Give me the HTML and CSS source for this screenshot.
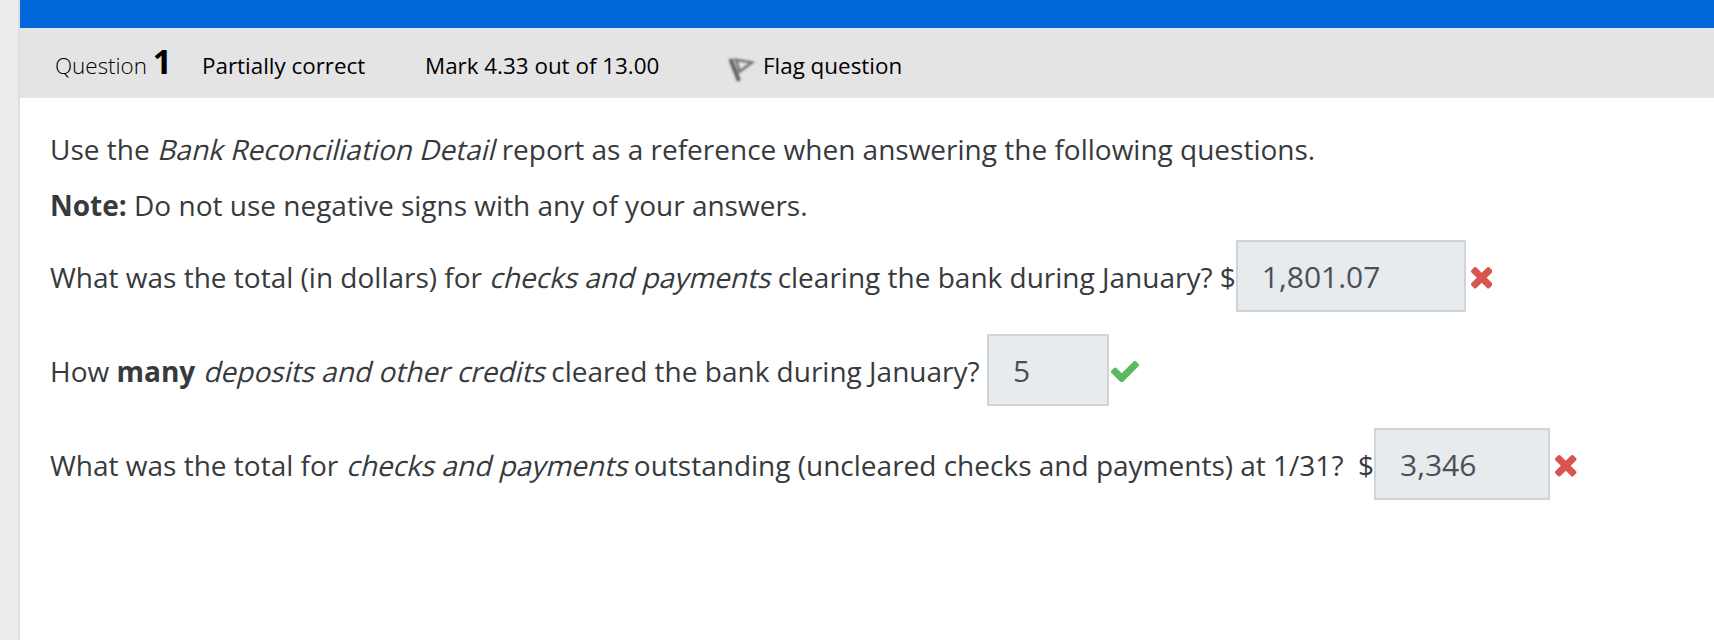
FILE: index.html
```html
<!DOCTYPE html>
<html lang="en">
<head>
<meta charset="utf-8">
<title>Question 1</title>
<link rel="stylesheet" href="styles.css">
</head>
<body>
<svg width="0" height="0" class="defs"><defs>
  <path id="remove" d="M1298 1322q0 40-28 68l-136 136q-28 28-68 28t-68-28l-294-294-294 294q-28 28-68 28t-68-28l-136-136q-28-28-28-68t28-68l294-294-294-294q-28-28-28-68t28-68l136-136q28-28 68-28t68 28l294 294 294-294q28-28 68-28t68 28l136 136q28 28 28 68t-28 68l-294 294 294 294q28 28 28 68z"/>
</defs></svg>
<main class="panel">
  <div class="banner"></div>
  <header class="info">
    <h3 class="number">Question <span class="qno">1</span></h3>
    <div class="state">Partially correct</div>
    <div class="grade">Mark 4.33 out of 13.00</div>
    <div class="flag"><svg class="flag-icon" viewBox="0 0 32 32" width="32" height="32"><g fill="none" stroke="#444"><path d="M4.500 6 L13 28" stroke-width="4.200" opacity=".8"/><path d="M8 6.500 L26 9.500 L13.500 18.500 L10.500 8" stroke-width="2.600" opacity=".7"/></g></svg>Flag question</div>
  </header>
  <section class="content">
    <p class="text">Use the <em>Bank Reconciliation Detail</em> report as a reference when answering the following questions.</p>
    <p class="text"><strong>Note:</strong> Do not use negative signs with any of your answers.</p>
    <div class="row"><span>What was the total (in dollars) for <em>checks and payments</em> clearing the bank during January? $</span><input class="answer amount" value="1,801.07" readonly><svg class="cross" viewBox="110 366 1188 1188"><use href="#remove"/></svg></div>
    <div class="row"><span>How <strong>many</strong> <em>deposits and other credits</em> cleared the bank during January? </span><input class="answer count" value="5" readonly><svg class="check" viewBox="121 338 1550 1184"><path d="M1671 566q0 40-28 68l-724 724-136 136q-28 28-68 28t-68-28l-136-136-362-362q-28-28-28-68t28-68l136-136q28-28 68-28t68 28l294 295 656-657q28-28 68-28t68 28l136 136q28 28 28 68z"/></svg></div>
    <div class="row"><span>What was the total for <em>checks and payments</em> outstanding (uncleared checks and payments) at 1/31?&nbsp; $</span><input class="answer total" value="3,346" readonly><svg class="cross" viewBox="110 366 1188 1188"><use href="#remove"/></svg></div>
  </section>
</main>
</body>
</html>
```
FILE: styles.css
```css
* { box-sizing: border-box; }
body {
  margin: 0;
  height: 640px;
  overflow: hidden;
  padding-left: 18px;
  background: #ebecee;
  font-family: "Open Sans", sans-serif;
  color: #373a3c;
}
.defs { display: none; }
.panel { height: 640px; border-left: 2px solid #dedede; background: #fff; }
.banner { height: 28px; background: #0068d9; }
.info {
  display: flex;
  align-items: baseline;
  height: 70px;
  padding: 14px 0 0 35px;
  background: #e4e4e4;
  color: #000;
  font-size: 22.4px;
  line-height: 48px;
}
.number { margin: 0; width: 147px; font-size: 22.4px; font-weight: 300; white-space: nowrap; }
.qno { font-size: 33.6px; font-weight: 700; line-height: 1; }
.state { width: 223px; }
.grade { width: 301px; }
.flag-icon { margin: 0 5px 0 0; vertical-align: -11px; filter: blur(.8px); }
.content { padding: 30px 0 0 30px; font-size: 28px; }
/* Upright face slanted about its baseline, keeping the regular letter widths */
.content em { display: inline-block; font-style: normal; transform: skewX(-14deg); transform-origin: 50% 76%; }
.text { margin: 0 0 14px; line-height: 42px; white-space: nowrap; }
.row { display: flex; align-items: center; height: 72px; margin-bottom: 22px; white-space: pre; }
.row span { padding-top: 1px; line-height: 42px; }
.answer {
  height: 72px;
  padding: 0 24px;
  border: 2px solid #ced4da;
  border-radius: 0;
  background: #e7ebee;
  color: #495057;
  font: 30px "Open Sans", sans-serif;
  outline: 0;
}
.amount { width: 230px; }
.count { width: 122px; }
.total { width: 176px; }
.cross { width: 21.5px; height: 21.5px; margin: 4px 0 0 5px; fill: #d9534f; }
.check { width: 28px; height: 21.4px; margin: 3px 0 0 2px; fill: #5cb860; }
```
